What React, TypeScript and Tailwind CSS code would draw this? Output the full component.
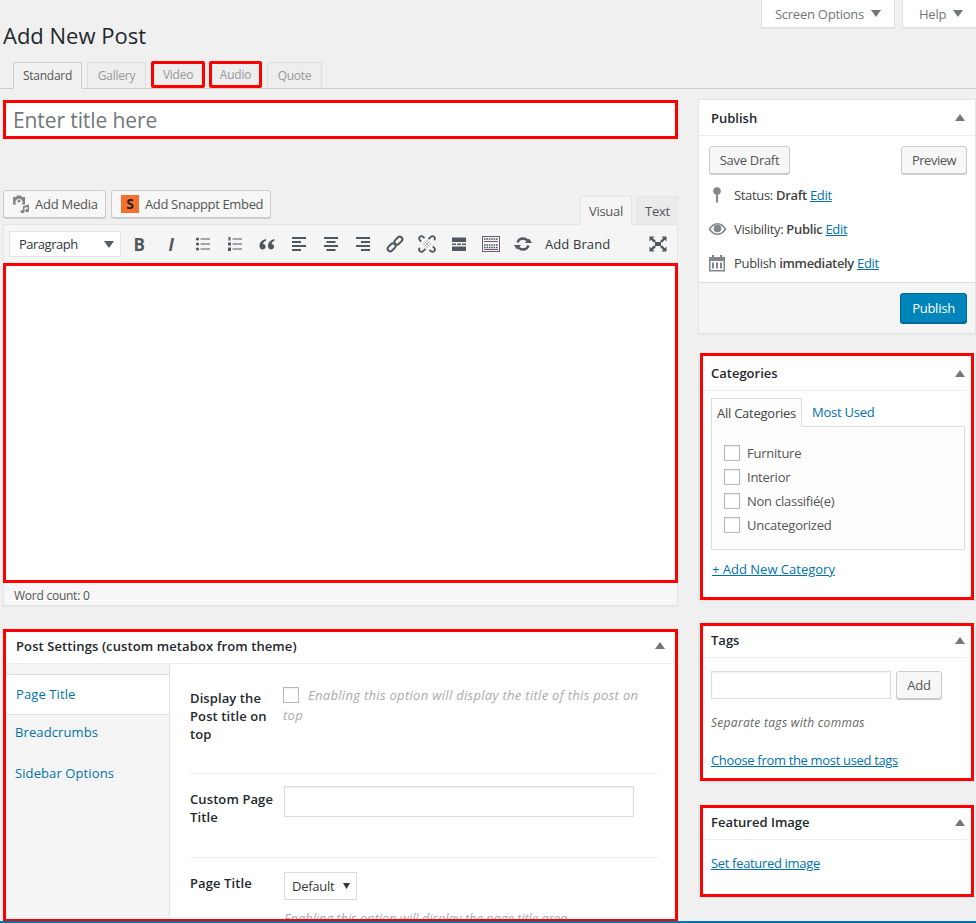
import React from 'react'

const ink = '#50575e'

function Caret({ className = '' }: { className?: string }) {
  return (
    <svg width="10" height="7" viewBox="0 0 10 7" className={className}>
      <path d="M0 7 L5 0 L10 7 Z" fill="#72777c" />
    </svg>
  )
}

function DownCaret({ fill = '#72777c' }: { fill?: string }) {
  return (
    <svg width="10" height="7" viewBox="0 0 10 7">
      <path d="M0 0 L10 0 L5 7 Z" fill={fill} />
    </svg>
  )
}

function ToolIcon({ children }: { children: React.ReactNode }) {
  return <span className="w-[32px] h-[20px] flex items-center justify-center shrink-0">{children}</span>
}

function Svg({ children, w = 16, h = 16 }: { children: React.ReactNode; w?: number; h?: number }) {
  return (
    <svg width={w} height={h} viewBox={`0 0 ${w} ${h}`} fill={ink}>
      {children}
    </svg>
  )
}

function Toolbar() {
  return (
    <div className="h-[39px] bg-[#f5f5f5] border-t border-x border-[#e5e5e5] flex items-center pl-[5px]">
      <div className="w-[112px] h-[26px] bg-white border border-[#e5e5e5] flex items-center justify-between pl-[9px] pr-[6px] text-[#32373c] tracking-[-0.5px]">
        Paragraph
        <DownCaret fill="#555d66" />
      </div>
      <div className="flex items-center ml-[2px]">
        <ToolIcon>
          <span className="text-[17px] font-bold text-[#50575e] leading-none">B</span>
        </ToolIcon>
        <ToolIcon>
          <span className="text-[17px] font-bold italic text-[#50575e] leading-none">I</span>
        </ToolIcon>
        <ToolIcon>
          <Svg>
            <circle cx="2.5" cy="3" r="1.6" />
            <circle cx="2.5" cy="8" r="1.6" />
            <circle cx="2.5" cy="13" r="1.6" />
            <rect x="5.5" y="2.5" width="9.5" height="1" />
            <rect x="5.5" y="7.5" width="9.5" height="1" />
            <rect x="5.5" y="12.5" width="9.5" height="1" />
          </Svg>
        </ToolIcon>
        <ToolIcon>
          <Svg>
            <rect x="1.5" y="1" width="2" height="3.5" />
            <rect x="1" y="6.5" width="3" height="3" />
            <rect x="1" y="11.5" width="3" height="3.5" />
            <rect x="5.5" y="2.5" width="9.5" height="1" />
            <rect x="5.5" y="7.5" width="9.5" height="1" />
            <rect x="5.5" y="12.5" width="9.5" height="1" />
          </Svg>
        </ToolIcon>
        <ToolIcon>
          <Svg>
            <path d="M7 3 C3 4 0.5 6.5 0.5 10 C0.5 12.2 1.8 13.5 3.6 13.5 C5.4 13.5 6.6 12.3 6.6 10.6 C6.6 9 5.5 8 4 8 C4.2 6.6 5.4 5.4 7 4.8 Z" />
            <path d="M15.5 3 C11.5 4 9 6.5 9 10 C9 12.2 10.3 13.5 12.1 13.5 C13.9 13.5 15.1 12.3 15.1 10.6 C15.1 9 14 8 12.5 8 C12.7 6.6 13.9 5.4 15.5 4.8 Z" />
          </Svg>
        </ToolIcon>
        <ToolIcon>
          <Svg>
            <rect x="1" y="1" width="14" height="2" />
            <rect x="1" y="5" width="9" height="2" />
            <rect x="1" y="9" width="14" height="2" />
            <rect x="1" y="13" width="9" height="2" />
          </Svg>
        </ToolIcon>
        <ToolIcon>
          <Svg>
            <rect x="1" y="1" width="14" height="2" />
            <rect x="3.5" y="5" width="9" height="2" />
            <rect x="1" y="9" width="14" height="2" />
            <rect x="3.5" y="13" width="9" height="2" />
          </Svg>
        </ToolIcon>
        <ToolIcon>
          <Svg>
            <rect x="1" y="1" width="14" height="2" />
            <rect x="6" y="5" width="9" height="2" />
            <rect x="1" y="9" width="14" height="2" />
            <rect x="6" y="13" width="9" height="2" />
          </Svg>
        </ToolIcon>
        <ToolIcon>
          <svg width="18" height="18" viewBox="0 0 18 18" fill="none" stroke={ink} strokeWidth="2">
            <rect x="-4.5" y="-2.6" width="9" height="5.2" rx="2.6" transform="translate(5.6 12.4) rotate(-45)" />
            <rect x="-4.5" y="-2.6" width="9" height="5.2" rx="2.6" transform="translate(12.4 5.6) rotate(-45)" />
          </svg>
        </ToolIcon>
        <ToolIcon>
          <svg width="18" height="18" viewBox="0 0 18 18" fill="none" stroke={ink} strokeWidth="1.8">
            <path d="M1.8 12.8 C0.9 13.7 0.9 15.2 1.8 16.1 C2.7 17.1 4.2 17.1 5.2 16.1 L7.5 13.8" />
            <path d="M16.2 5.2 C17.1 4.3 17.1 2.8 16.2 1.9 C15.3 0.9 13.8 0.9 12.8 1.9 L10.5 4.2" />
            <path d="M6.5 3.2 L5.2 1.9 C4.2 0.9 2.7 0.9 1.8 1.9 C0.9 2.8 0.9 4.3 1.8 5.2 L3.2 6.6" />
            <path d="M11.5 14.8 L12.8 16.1 C13.8 17.1 15.3 17.1 16.2 16.1 C17.1 15.2 17.1 13.7 16.2 12.8 L14.8 11.4" />
            <path d="M6.5 6.5 L11.5 11.5 M11.5 6.5 L6.5 11.5 M9 5 L9 7 M9 11 L9 13 M5 9 L7 9 M11 9 L13 9" stroke="#aab0b5" strokeWidth="1" />
          </svg>
        </ToolIcon>
        <ToolIcon>
          <Svg>
            <rect x="1" y="1.5" width="14" height="4.5" />
            <rect x="1" y="7.5" width="4" height="1.5" />
            <rect x="6" y="7.5" width="4" height="1.5" />
            <rect x="11" y="7.5" width="4" height="1.5" />
            <rect x="1" y="10.5" width="14" height="4.5" />
          </Svg>
        </ToolIcon>
        <ToolIcon>
          <svg width="18" height="16" viewBox="0 0 18 16" fill="none">
            <rect x="0.5" y="0.5" width="17" height="15" stroke="#6b5a6e" />
            <path d="M2 3 H16 M2 9 H16 M2 11.5 H16" stroke={ink} strokeWidth="1.5" strokeDasharray="1.6 .8" />
            <rect x="2" y="5" width="14" height="1" fill="#6b5a6e" />
            <rect x="2" y="13" width="14" height="1" fill="#6b5a6e" />
          </svg>
        </ToolIcon>
        <ToolIcon>
          <svg width="18" height="16" viewBox="0 0 18 16" fill="none">
            <path d="M3.5 6.5 C4.5 3.8 6.6 2.5 9 2.5 C10.8 2.5 12.3 3.2 13.4 4.4" stroke={ink} strokeWidth="2.4" />
            <path d="M14.5 9.5 C13.5 12.2 11.4 13.5 9 13.5 C7.2 13.5 5.7 12.8 4.6 11.6" stroke={ink} strokeWidth="2.4" />
            <path d="M11 7 H18 L15 2.5 Z M0 9 H7 L3 13.5 Z" fill={ink} />
          </svg>
        </ToolIcon>
        <span className="ml-[6px] text-[#32373c] tracking-[0.1px]">Add Brand</span>
      </div>
      <span className="ml-auto mr-[10px]">
        <Svg w={18} h={16}>
          <path d="M0.5 0.5 H5.5 L3.8 2.2 L7 5 L5 6.8 L2.2 3.8 L0.5 5.5 Z" />
          <path d="M17.5 0.5 H12.5 L14.2 2.2 L11 5 L13 6.8 L15.8 3.8 L17.5 5.5 Z" />
          <path d="M0.5 15.5 H5.5 L3.8 13.8 L7 11 L5 9.2 L2.2 12.2 L0.5 10.5 Z" />
          <path d="M17.5 15.5 H12.5 L14.2 13.8 L11 11 L13 9.2 L15.8 12.2 L17.5 10.5 Z" />
          <rect x="6" y="6" width="6" height="4" />
        </Svg>
      </span>
    </div>
  )
}

function TopTab({ label, active, red, width }: { label: string; active?: boolean; red?: boolean; width: string }) {
  if (active) {
    return (
      <div className={`h-[27px] -mb-px ${width} bg-[#f1f1f1] border border-[#ccc] border-b-[#f1f1f1] rounded-t-[2px] flex items-center justify-center text-[12px] text-[#555]`}>
        {label}
      </div>
    )
  }
  return (
    <div
      className={
        red
          ? `h-[27px] ${width} border-[3px] border-[#f00] rounded-[2px] bg-[#eee] flex items-center justify-center text-[12px] text-[#999]`
          : `h-[26px] ${width} border border-[#ddd] border-b-0 rounded-t-[2px] bg-[#eee] flex items-center justify-center text-[12px] text-[#999]`
      }
    >
      {label}
    </div>
  )
}

function SideBox({ title, headClass, children }: { title: string; headClass: string; children: React.ReactNode }) {
  return (
    <div className="bg-white border border-[#e5e5e5] shadow-[0_1px_1px_rgba(0,0,0,0.04)]">
      <div className="border-[3px] border-[#f00] mr-[1px] ml-px -my-px">
        <div className={`flex items-center justify-between ${headClass} pl-[8px] pr-[6px] border-b border-[#eee] font-semibold text-[13px] tracking-normal text-[#23282d]`}>
          {title}
          <Caret />
        </div>
        {children}
      </div>
    </div>
  )
}

function Check() {
  return <span className="block w-[16px] h-[16px] shrink-0 bg-white border border-[#b4b9be] shadow-[inset_0_1px_2px_rgba(0,0,0,0.07)]" />
}

function Button({ children, className = '' }: { children: React.ReactNode; className?: string }) {
  return (
    <div
      className={`h-[28px] flex items-center bg-[#f7f7f7] border border-[#ccc] rounded-[3px] shadow-[0_1px_0_#ccc] text-[#555] ${className}`}
    >
      {children}
    </div>
  )
}

function PublishRow({ icon, children }: { icon: React.ReactNode; children: React.ReactNode }) {
  return (
    <div className="h-[34px] flex items-center pl-[9px] text-[#444] tracking-[-0.33px]">
      <span className="w-[26px] flex items-center">{icon}</span>
      <span>{children}</span>
    </div>
  )
}

function Edit() {
  return <a className="text-[#0073aa] underline font-normal">Edit</a>
}

export default function App() {
  return (
    <div className="relative w-[976px] h-[923px] overflow-hidden bg-[#f0f0f0] text-[13px] leading-[18px] tracking-[-0.25px] font-['Open_Sans',sans-serif]">
      {/* Screen meta */}
      <div className="h-[28px] flex justify-end gap-[7px] text-[#72777c]">
        <div className="w-[134px] bg-white border-x border-b border-[#e1e1e1] shadow-[0_1px_1px_rgba(0,0,0,0.04)] flex items-center justify-center gap-[7px]">
          Screen Options
          <DownCaret />
        </div>
        <div className="w-[74px] bg-white border-l border-b border-[#e1e1e1] shadow-[0_1px_1px_rgba(0,0,0,0.04)] flex items-center pl-[16px] gap-[7px]">
          Help
          <DownCaret />
        </div>
      </div>

      <h1 className="ml-[3px] mt-[-13px] h-[40px] flex items-center text-[22px] tracking-normal text-[#23282d]">Add New Post</h1>

      {/* Post format tabs */}
      <div className="mt-[7px] h-[27px] border-b border-[#ccc] flex items-end pl-[13px]">
        <TopTab label="Standard" active width="w-[69px] mr-[5px]" />
        <TopTab label="Gallery" width="w-[59px] mr-[5px]" />
        <TopTab label="Video" red width="w-[54px] mr-[4px]" />
        <TopTab label="Audio" red width="w-[53px] mr-[5px]" />
        <TopTab label="Quote" width="w-[55px]" />
      </div>

      <div className="flex items-start mt-[10px]">
        {/* Main column */}
        <div className="w-[675px] ml-[3px] shrink-0">
          <div className="h-[39px] mt-[1px] bg-white border-[3px] border-[#f00] flex items-center pl-[7px] text-[21px] tracking-[-0.1px] text-[#72777c]">
            Enter title here
          </div>

          <div className="mt-[51px] flex items-end justify-between h-[34px]">
            <div className="flex gap-[5px] self-start">
              <Button className="w-[103px] pl-[8px] gap-[3px]">
                <svg width="20" height="18" viewBox="0 0 20 18" fill="#82878c">
                  <path fillRule="evenodd" d="M1 2 H4 L5 0.5 H9 L10 2 H13 V9.5 H9.6 A3.4 3.4 0 1 0 4.4 9.5 H1 Z" />
                  <circle cx="7" cy="6" r="1.6" />
                  <path d="M11 11 L17 9.5 V15.5 A2 1.7 0 1 1 15.5 14 V12 L12.5 12.8 V16.5 A2 1.7 0 1 1 11 15 Z" />
                </svg>
                Add Media
              </Button>
              <Button className="w-[160px] pl-[9px] gap-[6px] tracking-[-0.35px]">
                <span className="w-[18px] h-[18px] bg-[#f4712d] text-[#222] text-[14px] font-bold flex items-center justify-center leading-none">
                  S
                </span>
                Add Snapppt Embed
              </Button>
            </div>
            <div className="flex items-end gap-[5px] h-[28px]">
              <div className="h-[29px] -mb-px w-[52px] bg-[#f5f5f5] border border-[#e5e5e5] border-b-[#f5f5f5] flex items-center justify-center text-[#555]">
                Visual
              </div>
              <div className="h-[28px] w-[41px] bg-[#ebebeb] border-t border-x border-[#e5e5e5] flex items-center justify-center text-[#555]">
                Text
              </div>
            </div>
          </div>

          <Toolbar />

          <div className="h-[320px] bg-white border-[3px] border-[#f00]" />
          <div className="h-[23px] bg-[#f7f7f7] border border-t-0 border-[#e5e5e5] pl-[10px] pt-[3px] flex items-center text-[12px] text-[#555] shadow-[0_1px_1px_rgba(0,0,0,0.04)]">
            Word count: 0
          </div>

          {/* Post Settings metabox */}
          <div className="mt-[23px] h-[293px] bg-white border-[3px] border-[#f00] overflow-hidden">
            <div className="h-[32px] pl-[10px] pr-[10px] pb-[4px] border-b border-[#eee] flex items-center justify-between font-semibold text-[13px] tracking-[0.1px] text-[#23282d]">
              Post Settings (custom metabox from theme)
              <Caret />
            </div>
            <div className="flex h-[258px]">
              <div className="w-[164px] shrink-0 bg-[#f5f5f5] border-r border-[#e5e5e5] text-[#0073aa] tracking-[0.1px]">
                <div className="h-[11px] border-b border-[#dfdfdf]" />
                <div className="h-[39px] bg-white pl-[10px] pb-[2px] flex items-center">Page Title</div>
                <div className="border-t border-[#dfdfdf] pl-[9px] pt-[8px]">Breadcrumbs</div>
                <div className="pl-[9px] pt-[23px]">Sidebar Options</div>
              </div>
              <div className="ml-[20px] w-[467px] text-[13px]">
                <div className="flex h-[110px] border-b border-[#eee] pt-[25px]">
                  <div className="w-[93px] shrink-0 font-semibold tracking-[0.1px] text-[#23282d]">
                    Display the
                    <br />
                    Post title on
                    <br />
                    top
                  </div>
                  <div className="leading-[20px] italic tracking-[0.3px] text-[#aaa] w-[358px] -mt-[4px]">
                    <div className="flex">
                      <span className="mr-[9px] mt-[2px]">
                        <Check />
                      </span>
                      Enabling this option will display the title of this post on
                    </div>
                    <div>top</div>
                  </div>
                </div>
                <div className="flex h-[84px] border-b border-[#eee] pt-[12px]">
                  <div className="w-[94px] shrink-0 font-semibold tracking-[0.1px] text-[#23282d] pt-[4px]">
                    Custom Page
                    <br />
                    Title
                  </div>
                  <div className="w-[350px] h-[31px] bg-white border border-[#ddd] shadow-[inset_0_1px_2px_rgba(0,0,0,0.07)]" />
                </div>
                <div className="flex pt-[14px]">
                  <div className="w-[94px] shrink-0 font-semibold tracking-[0.1px] text-[#23282d] pt-[2px]">Page Title</div>
                  <div>
                    <div className="w-[73px] h-[28px] bg-white border border-[#ddd] flex items-center justify-between pl-[7px] pr-[6px] text-[#32373c]">
                      Default
                      <svg width="7" height="6" viewBox="0 0 7 6">
                        <path d="M0 0 H7 L3.5 6 Z" fill="#32373c" />
                      </svg>
                    </div>
                    <div className="mt-[9px] italic tracking-[-0.1px] text-[#aaa] whitespace-nowrap">
                      Enabling this option will display the page title area
                    </div>
                  </div>
                </div>
              </div>
            </div>
          </div>
        </div>

        {/* Sidebar */}
        <div className="w-[278px] ml-[20px] shrink-0">
          <div className="bg-white border border-[#e5e5e5] shadow-[0_1px_1px_rgba(0,0,0,0.04)] h-[235px] flex flex-col">
            <div className="flex items-center justify-between h-[36px] pl-[12px] pr-[10px] border-b border-[#eee] font-semibold text-[13px] tracking-normal text-[#23282d]">
              Publish
              <Caret />
            </div>
            <div className="flex justify-between pl-[10px] pr-[8px] pt-[10px]">
              <Button className="w-[81px] justify-center tracking-[-0.3px]">Save Draft</Button>
              <Button className="w-[66px] justify-center tracking-[-0.5px]">Preview</Button>
            </div>
            <div className="mt-[4px]">
              <PublishRow
                icon={
                  <svg width="18" height="16" viewBox="0 0 18 16" fill="#82878c">
                    <circle cx="9" cy="4" r="3.8" />
                    <rect x="8" y="6" width="2" height="9.5" />
                  </svg>
                }
              >
                Status: <b className="font-semibold">Draft</b> <Edit />
              </PublishRow>
              <PublishRow
                icon={
                  <svg width="19" height="14" viewBox="0 0 19 14" fill="#82878c">
                    <path fillRule="evenodd" d="M0.5 7 C3 3 6 1 9.5 1 C13 1 16 3 18.5 7 C16 11 13 13 9.5 13 C6 13 3 11 0.5 7 Z M2.5 7 C4.5 10 7 11.6 9.5 11.6 C12 11.6 14.5 10 16.5 7 C14.5 4 12 2.4 9.5 2.4 C7 2.4 4.5 4 2.5 7 Z" />
                    <circle cx="9.5" cy="6.5" r="3.8" />
                  </svg>
                }
              >
                Visibility: <b className="font-semibold">Public</b> <Edit />
              </PublishRow>
              <PublishRow
                icon={
                  <svg width="18" height="17" viewBox="0 0 18 17" fill="#82878c">
                    <path fillRule="evenodd" d="M1 2 H4 V0 H6 V2 H12 V0 H14 V2 H17 V16.5 H1 Z M2.5 6 V15 H15.5 V6 Z" />
                    <rect x="4" y="7.5" width="2" height="6" />
                    <rect x="8" y="7.5" width="2" height="6" />
                    <rect x="12" y="7.5" width="2" height="6" />
                  </svg>
                }
              >
                Publish <b className="font-semibold">immediately</b> <Edit />
              </PublishRow>
            </div>
            <div className="mt-auto h-[51px] bg-[#f5f5f5] border-t border-[#ddd] flex items-start justify-end pt-[10px] pr-[8px]">
              <div className="w-[67px] h-[30px] bg-[#0085ba] border border-[#006799] rounded-[3px] shadow-[0_1px_0_#006799] flex items-center justify-center text-white">
                Publish
              </div>
            </div>
          </div>

          <div className="mt-[19px]">
            <SideBox title="Categories" headClass="h-[35px]">
              <div className="h-[206px] pl-[8px] pr-[6px] pt-[7px]">
                <div className="flex items-end h-[28px] text-[#0073aa]">
                  <div className="h-[29px] w-[91px] -mb-px relative z-10 bg-[#fdfdfd] border border-[#ddd] border-b-[#fdfdfd] flex items-center justify-center text-[#444]">
                    All Categories
                  </div>
                  <div className="h-[28px] pl-[10px] flex items-center">Most Used</div>
                </div>
                <div className="h-[124px] bg-[#fdfdfd] border border-[#ddd] pl-[12px] pt-[18px] text-[#555] flex flex-col gap-[8px]">
                  {['Furniture', 'Interior', 'Non classifié(e)', 'Uncategorized'].map((c) => (
                    <div key={c} className="flex items-center gap-[7px] h-[16px]">
                      <Check />
                      {c}
                    </div>
                  ))}
                </div>
                <a className="block mt-[10px] ml-[1px] text-[#0073aa] underline font-medium tracking-normal">+ Add New Category</a>
              </div>
            </SideBox>
          </div>

          <div className="mt-[23px]">
            <SideBox title="Tags" headClass="h-[32px] pb-[3px]">
              <div className="h-[120px] pl-[8px] pt-[13px]">
                <div className="flex gap-[5px]">
                  <div className="w-[180px] h-[28px] bg-white border border-[#ddd] shadow-[inset_0_1px_2px_rgba(0,0,0,0.07)]" />
                  <Button className="w-[46px] justify-center">Add</Button>
                </div>
                <div className="mt-[15px] italic tracking-[0.3px] text-[#666] text-[12px]">Separate tags with commas</div>
                <a className="block mt-[19px] text-[#0073aa] underline tracking-[-0.33px]">Choose from the most used tags</a>
              </div>
            </SideBox>
          </div>

          <div className="mt-[24px]">
            <SideBox title="Featured Image" headClass="h-[32px] pb-[3px]">
              <div className="h-[54px] pl-[8px] pt-[14px]">
                <a className="text-[#0073aa] underline tracking-[-0.33px]">Set featured image</a>
              </div>
            </SideBox>
          </div>
        </div>
      </div>

      {/* Strip of the next admin bar, cut off by the picture */}
      <div className="absolute left-0 right-0 bottom-0 h-[2px] bg-[#0073aa]" />
    </div>
  )
}
